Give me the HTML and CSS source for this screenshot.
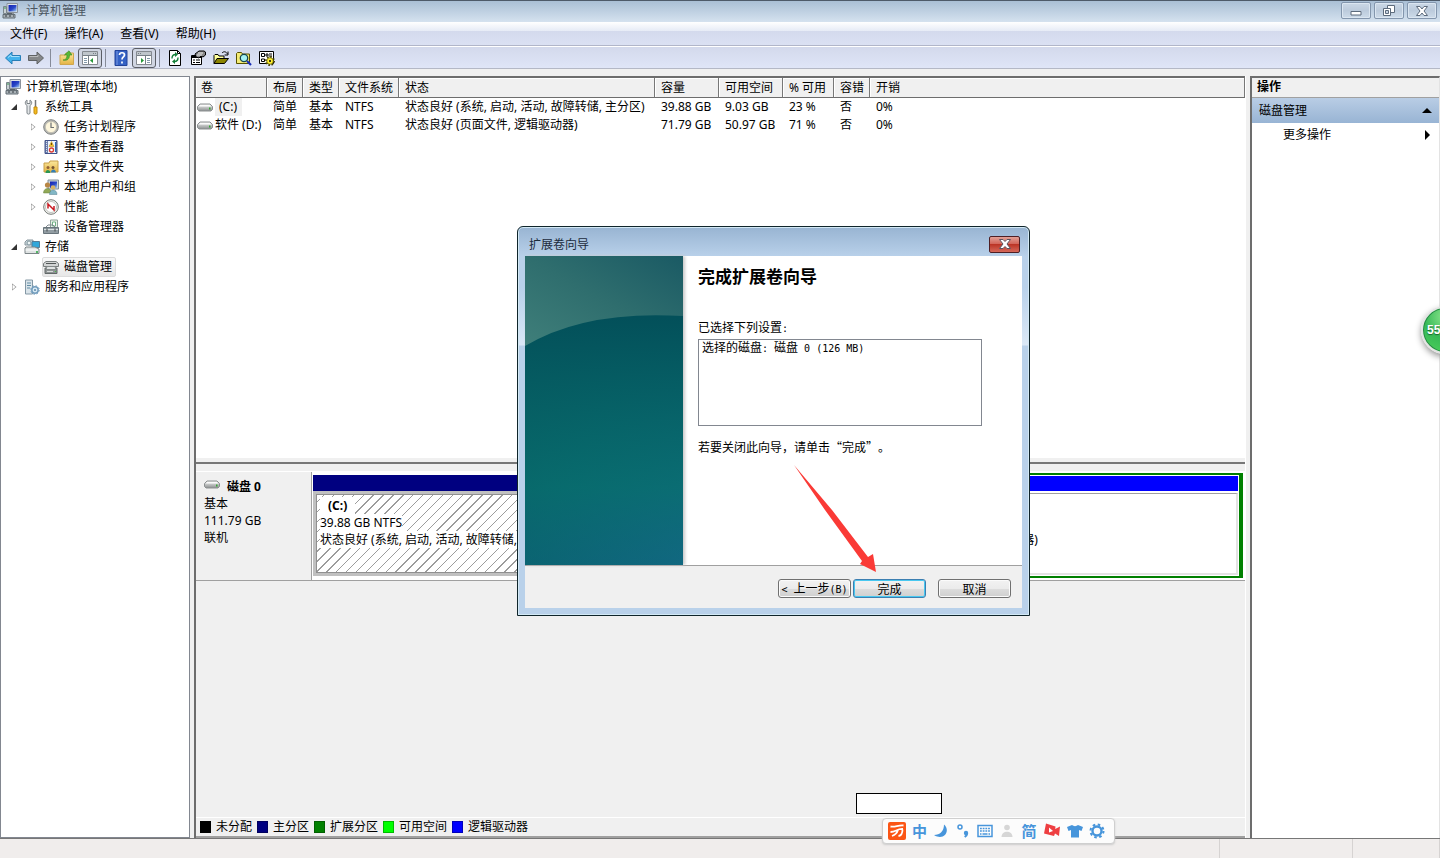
FILE: index.html
```html
<!DOCTYPE html>
<html lang="zh-CN">
<head>
<meta charset="utf-8">
<title>计算机管理</title>
<link rel="stylesheet" href="styles.css">
</head>
<body>
<svg class="defs" aria-hidden="true">
  <defs>
    <linearGradient id="screen" x2="1" y2="1"><stop offset="0" stop-color="#1520b0"/><stop offset=".55" stop-color="#2a48c8"/><stop offset="1" stop-color="#a9d4f5"/></linearGradient>
    <linearGradient id="metal" x2="0" y2="1"><stop offset="0" stop-color="#f4f4f4"/><stop offset="1" stop-color="#8b8f8f"/></linearGradient>
    <linearGradient id="gold" x2="0" y2="1"><stop offset="0" stop-color="#fbe89c"/><stop offset="1" stop-color="#e4b345"/></linearGradient>
  </defs>
  <symbol id="i-computer" viewBox="0 0 16 16">
    <path d="M5 .5h10.500v9H5z" fill="#dfe3e6" stroke="#8b939c"/><path d="M6.500 2h8v6.500h-8z" fill="url(#screen)"/><path d="M9 9.500h3v2H9z" fill="#8d949b"/>
    <path d="M1.500 3.500h3v7h-3z" fill="#c8d0d4" stroke="#7b868c"/><path d="M2 5h2" stroke="#3c9a52"/>
    <path d="M1 11.500h12v3.500H1z" fill="#a8b1b6" stroke="#636d74"/><path d="M3 13h2m2 0h2m2 0h1" stroke="#343b40"/><path d="M5 10.500h5" stroke="#596168"/>
  </symbol>
  <symbol id="i-drive" viewBox="0 0 16 9">
    <path d="M3 1h10l2.500 2.500v3L14 8H2L.5 6.500v-3z" fill="url(#metal)" stroke="#8b8f90"/><path d="M3 2h10l1 1.500H2z" fill="#fafafa"/><path d="M12 4.500h1.500v2H12z" fill="#33a532"/>
  </symbol>
  <symbol id="i-tools" viewBox="0 0 16 16">
    <path d="M3 1v3.500h3V1c2.500 1.500 2 4.500 0 5.500V14c0 1.500-3 1.500-3 0V6.500C1 5.500.5 2.500 3 1z" fill="#e3e6e8" stroke="#7c8388"/><path d="M11.500 1v7" stroke="#777" stroke-width="1.500"/><path d="M10 8h3v6c0 1.500-3 1.500-3 0z" fill="#f3bb20" stroke="#c58b0b"/>
  </symbol>
  <symbol id="i-clock" viewBox="0 0 16 16"><circle cx="8" cy="8" r="7.300" fill="#b5b7b5" stroke="#828482"/><circle cx="8" cy="8" r="5.600" fill="#fdf6dc" stroke="#b9b6a6" stroke-width=".6"/><path d="M8 3.500V8.500H11" fill="none" stroke="#6c7072" stroke-width="1.200"/></symbol>
  <symbol id="i-event" viewBox="0 0 16 16"><path d="M2 1.500h12v13H2z" fill="#7182b0" stroke="#41528a"/><path d="M5 2h8v12H5z" fill="#eef3fa"/><path d="M3.500 2v12" stroke="#dbe1ec" stroke-dasharray="1 1"/><path d="M8.500 2.500 11 7.500H6z" fill="#f5c22a" stroke="#b98a12" stroke-width=".5"/><path d="M8.500 4v2" stroke="#744b00"/><circle cx="8.500" cy="11" r="2" fill="#fff" stroke="#d93a32" stroke-width="1.300"/><path d="M12.500 3v10" stroke="#2e67b4"/></symbol>
  <symbol id="i-share" viewBox="0 0 16 16"><path d="M1 4h5l1-2h8v11H1z" fill="url(#gold)" stroke="#c9a04a"/><circle cx="5" cy="8.500" r="1.500" fill="#946236"/><circle cx="10" cy="8.500" r="1.500" fill="#715031"/><path d="M2.500 14c0-4 4.500-4 5 0z" fill="#2b9652"/><path d="M8 13.500c0-4 4.500-4 5 0z" fill="#347eb5"/></symbol>
  <symbol id="i-users" viewBox="0 0 16 16"><path d="M5 1h10.500v9H5z" fill="#c9d4df" stroke="#84919c"/><path d="M7 2.500h7V9H7z" fill="url(#screen)"/><circle cx="4.500" cy="6" r="2.600" fill="#b88645"/><path d="M.5 14c0-6 8-6 8 0z" fill="#91a957" stroke="#66813c" stroke-width=".5"/><circle cx="10" cy="8.500" r="2.300" fill="#d6b467"/><path d="M6.500 15.500c0-6 7.500-6 7.500 0z" fill="#81b7c6" stroke="#547f91" stroke-width=".5"/></symbol>
  <symbol id="i-perf" viewBox="0 0 16 16"><circle cx="8" cy="8" r="7.300" fill="#f5f5f0" stroke="#747976"/><circle cx="8" cy="8" r="5.500" fill="#fff" stroke="#a7aaa6" stroke-width=".7"/><path d="M5 9.500V5L11 11V7" fill="none" stroke="#c91920" stroke-width="1.500"/></symbol>
  <symbol id="i-device" viewBox="0 0 16 16"><path d="M7.500 1h7v8h-7z" fill="#e9f2e9" stroke="#91a39a"/><path d="M9.500 3h3v4h-3z" fill="#fff" stroke="#70b284"/><path d="M3 8l2-2h5l2 2" fill="none" stroke="#818a90"/><path d="M.5 8.500h15v6H.5z" fill="#929da3" stroke="#68747b"/><path d="M1 10.500h14" stroke="#dce2e3"/><path d="M4 9.500v3m8-3v3" stroke="#42494d"/></symbol>
  <symbol id="i-storage" viewBox="0 0 16 16"><path d="M3 1h6v5H1V3z" fill="#cbd8dd" stroke="#89979f"/><circle cx="5" cy="4" r="2" fill="#edf5f6" stroke="#80959d"/><path d="M8 2.500h7.500v6H8z" fill="#31a7da" stroke="#517d98"/><path d="M2 8h9l4 2v4.500H1V9z" fill="#dfe3e3" stroke="#7c8588"/><path d="M1.500 11H14" stroke="#fff"/><path d="M12 13h2" stroke="#22a839" stroke-width="1.500"/></symbol>
  <symbol id="i-disk" viewBox="0 0 16 16"><path d="M3 2.500h10l2.500 2v3h-15v-3z" fill="#d3d5d5" stroke="#777c7c"/><path d="M3 4.500h10" stroke="#535858"/><path d="M2 9h12v5.500H2z" fill="#8e9494" stroke="#626868"/><path d="M4 7.500h8l1 3H3z" fill="#e1e4e4" stroke="#848989"/><path d="M4 12.500h6" stroke="#d7dada"/><path d="M12 12.500h1" stroke="#44c044"/></symbol>
  <symbol id="i-services" viewBox="0 0 16 16"><path d="M1.500 1h7v14h-7z" fill="#dae4ea" stroke="#8498a5"/><path d="M3 4h4M3 6.500h4M3 9h3" stroke="#628da4"/><circle cx="11" cy="11" r="3.200" fill="#d8e9f4" stroke="#739dbd" stroke-width="1.500"/><circle cx="11" cy="11" r="4.300" fill="none" stroke="#739dbd" stroke-dasharray="1.500 1.900"/><circle cx="11" cy="11" r="1" fill="#5d87a7"/></symbol>
  <symbol id="i-panel" viewBox="0 0 16 16"><path d="M.5 1.500h15v13H.5z" fill="#fff" stroke="#848990"/><path d="M1 2h14v3H1z" fill="#bfc5cb"/><path d="M11 3.500h1m1 0h1M1 5.500h14M6.500 6v8" stroke="#777f87"/><path d="M2 8.500h3M2 10.500h3M2 12.500h3" stroke="#8298aa"/><path d="M11 8v5L8 10.500z" fill="#269739"/></symbol>
</svg>

<div class="app">
  <header class="titlebar">
    <svg class="ico"><use href="#i-computer"/></svg>
    <h1 class="title">计算机管理</h1>
    <div class="winbtns">
      <button class="winbtn" aria-label="最小化"><svg width="12" height="12" viewBox="0 0 12 12"><path d="M1 6.500h10v3.500H1z" fill="#fff" stroke="#5d6b7c"/></svg></button>
      <button class="winbtn" aria-label="还原"><svg width="12" height="12" viewBox="0 0 12 12"><path d="M4.500.5h7v7h-7z" fill="#fff" stroke="#5d6b7c"/><path d="M.5 3.500h7v7h-7z" fill="#fff" stroke="#5d6b7c"/><path d="M2.500 5.500h3v3h-3z" fill="#c9d6e5" stroke="#5d6b7c"/></svg></button>
      <button class="winbtn" aria-label="关闭"><svg width="12" height="12" viewBox="0 0 12 12"><path d="M.5 1.500h3.500L6 4l2-2.500h3.500L8 6l3.500 4.500H8L6 8l-2 2.500H.5L4 6z" fill="#fff" stroke="#5d6b7c"/></svg></button>
    </div>
  </header>
  <nav class="menubar">
    <button>文件(F)</button><button>操作(A)</button><button>查看(V)</button><button>帮助(H)</button>
  </nav>
  <div class="toolbar">
    <button aria-label="后退"><svg class="ico" viewBox="0 0 16 16"><path d="M.5 8 7 2v3.500h8.500v5H7V14z" fill="#43b2ec" stroke="#277db6"/><path d="M3 7.500 6 5v1.500h8.500" fill="none" stroke="#a7e1fc"/></svg></button>
    <button aria-label="前进"><svg class="ico" viewBox="0 0 16 16"><path d="M15.500 8 9 2v3.500H.5v5H9V14z" fill="#858789" stroke="#5e6163"/><path d="M1.500 6.500H10V5" fill="none" stroke="#b9babc"/></svg></button>
    <span class="sep"></span>
    <button aria-label="上一级"><svg class="ico" viewBox="0 0 16 16"><path d="M1 5h5l1-2h7.500v11.500H1z" fill="url(#gold)" stroke="#cfa650"/><path d="M4 10c3 0 4-2 4-5H5.500L10 .8 13 5h-2.500c0 4-2 6-6.500 5z" fill="#56b836" stroke="#358821" stroke-width=".6"/></svg></button>
    <button class="pressed" aria-label="显示控制台树"><svg class="ico"><use href="#i-panel"/></svg></button>
    <span class="sep"></span>
    <button aria-label="帮助"><svg class="ico" viewBox="0 0 16 16"><path d="M2 .5h12v15H2z" fill="#3461c5" stroke="#234399"/><path d="M4 1v14" stroke="#7899e1"/><path d="M6.500 5c0-3 5-3 5 0 0 2-2.500 2-2.500 4.500M9 11.500v2" fill="none" stroke="#fff" stroke-width="1.700"/></svg></button>
    <button class="pressed" aria-label="显示操作窗格"><svg class="ico flip"><use href="#i-panel"/></svg></button>
    <span class="sep"></span>
    <button aria-label="刷新"><svg class="ico" viewBox="0 0 16 16"><path d="M2.500.5h8l3 3v12h-11z" fill="#fff" stroke="#000"/><path d="M10.500.5v3h3" fill="none" stroke="#000"/><path d="M5 8.500c0-3 1.500-4 3.500-4M11 7.500c0 3-1.500 4-3.500 4" fill="none" stroke="#14803b" stroke-width="1.400"/><path d="M8 2v5l3-2.500zM8 9v5l-3-2.500z" fill="#14803b"/></svg></button>
    <button aria-label="属性"><svg class="ico" viewBox="0 0 16 16"><path d="M1.500 5.500h10v9h-10z" fill="#fff" stroke="#000"/><path d="M2 7h9" stroke="#000" stroke-width="2"/><path d="M3 10h2m1 0h4M3 12.500h2m1 0h4" stroke="#000"/><path d="M5 4 9 1h5l1.500 1v3l-2.500 2-2-1-2 2-3-1z" fill="#888" stroke="#000"/><path d="M8 3h5M7 5h5" stroke="#eee"/></svg></button>
    <button aria-label="打开"><svg class="ico" viewBox="0 0 16 16"><path d="M1 13.500v-8l1-1h3l1 1.500h5v3" fill="#ffff9c" stroke="#000"/><path d="M1 13.500 4 8.500h11.500l-4 5z" fill="#8b8400" stroke="#000"/><path d="M9 3c2-2 4-1.500 5.500 1M15 1.500v3.500h-3.500" fill="none" stroke="#000"/></svg></button>
    <button aria-label="查找"><svg class="ico" viewBox="0 0 16 16"><path d="M.5 13.500V3.500l1-1h4l1 1.500h7v9.500z" fill="#f4eb75" stroke="#585200"/><circle cx="8" cy="8" r="3.700" fill="#a6f3f5" stroke="#15454d" stroke-width="1.300"/><path d="m11 11 4 4" stroke="#1b2eb7" stroke-width="2.200"/></svg></button>
    <button aria-label="设置"><svg class="ico" viewBox="0 0 16 16"><path d="M.5 1.500h14v12H.5z" fill="#fff" stroke="#000"/><path d="M2.500 3.500h3v3h-3zM2.500 9h3v2.500h-3z" fill="none" stroke="#000"/><path d="M7 4h2v2H7zM10 4h3M10 6h3" fill="none" stroke="#000"/><circle cx="11" cy="11" r="4" fill="none" stroke="#3f3b00" stroke-width="2" stroke-dasharray="1.500 1.600"/><circle cx="11" cy="11" r="3.300" fill="#ffef30" stroke="#5a5400" stroke-width=".7"/><circle cx="11" cy="11" r="1" fill="#000"/></svg></button>
  </div>

  <main class="workspace">
    <aside class="tree">
      <ul>
        <li class="node root"><svg class="ico"><use href="#i-computer"/></svg><span>计算机管理(本地)</span></li>
        <li class="node lv1"><i class="exp open"></i><svg class="ico"><use href="#i-tools"/></svg><span>系统工具</span></li>
        <li class="node lv2"><i class="exp shut"></i><svg class="ico"><use href="#i-clock"/></svg><span>任务计划程序</span></li>
        <li class="node lv2"><i class="exp shut"></i><svg class="ico"><use href="#i-event"/></svg><span>事件查看器</span></li>
        <li class="node lv2"><i class="exp shut"></i><svg class="ico"><use href="#i-share"/></svg><span>共享文件夹</span></li>
        <li class="node lv2"><i class="exp shut"></i><svg class="ico"><use href="#i-users"/></svg><span>本地用户和组</span></li>
        <li class="node lv2"><i class="exp shut"></i><svg class="ico"><use href="#i-perf"/></svg><span>性能</span></li>
        <li class="node lv2"><i class="exp"></i><svg class="ico"><use href="#i-device"/></svg><span>设备管理器</span></li>
        <li class="node lv1"><i class="exp open"></i><svg class="ico"><use href="#i-storage"/></svg><span>存储</span></li>
        <li class="node lv2"><i class="exp"></i><span class="selected"><svg class="ico"><use href="#i-disk"/></svg><span>磁盘管理</span></span></li>
        <li class="node lv1"><i class="exp shut"></i><svg class="ico"><use href="#i-services"/></svg><span>服务和应用程序</span></li>
      </ul>
    </aside>

    <section class="center">
      <div class="volumes">
        <table>
          <colgroup><col class="c-vol"><col class="c-s"><col class="c-s"><col class="c-fs"><col class="c-state"><col class="c-size"><col class="c-size"><col class="c-pct"><col class="c-s"><col></colgroup>
          <thead><tr><th>卷</th><th>布局</th><th>类型</th><th>文件系统</th><th>状态</th><th>容量</th><th>可用空间</th><th>% 可用</th><th>容错</th><th>开销</th></tr></thead>
          <tbody>
            <tr><td><span class="vol"><svg class="drv"><use href="#i-drive"/></svg><span class="hot">(C:)</span></span></td><td>简单</td><td>基本</td><td>NTFS</td><td>状态良好 (系统, 启动, 活动, 故障转储, 主分区)</td><td>39.88 GB</td><td>9.03 GB</td><td>23 %</td><td>否</td><td>0%</td></tr>
            <tr><td><span class="vol"><svg class="drv"><use href="#i-drive"/></svg><span>软件 (D:)</span></span></td><td>简单</td><td>基本</td><td>NTFS</td><td>状态良好 (页面文件, 逻辑驱动器)</td><td>71.79 GB</td><td>50.97 GB</td><td>71 %</td><td>否</td><td>0%</td></tr>
          </tbody>
        </table>
      </div>
      <div class="graph">
        <div class="diskrow">
          <div class="diskinfo">
            <div class="diskname"><svg class="drv"><use href="#i-drive"/></svg><b>磁盘 0</b></div>
            <div>基本</div><div>111.79 GB</div><div>联机</div>
          </div>
          <div class="parts">
            <div class="part primary"><div class="strip"></div><div class="body hatch"><div><b>(C:)</b></div><div><span>39.88 GB NTFS</span></div><div><span>状态良好 (系统, 启动, 活动, 故障转储, 主分区)</span></div></div></div>
            <div class="part logical"><div class="strip"></div><div class="body"><div><b>软件 (D:)</b></div><div><span>71.79 GB NTFS</span></div><div><span>状态良好 (页面文件, 逻辑驱动器)</span></div></div></div>
          </div>
        </div>
      </div>
      <div class="legend">
        <span><i class="k-black"></i>未分配</span><span><i class="k-navy"></i>主分区</span><span><i class="k-green"></i>扩展分区</span><span><i class="k-lime"></i>可用空间</span><span><i class="k-blue"></i>逻辑驱动器</span>
      </div>
    </section>

    <aside class="actions">
      <h2>操作</h2>
      <button class="group">磁盘管理<svg width="10" height="5"><path d="M0 5 5 0l5 5z"/></svg></button>
      <button class="more">更多操作<svg width="5" height="10"><path d="M0 0l5 5-5 5z"/></svg></button>
    </aside>
  </main>
  <footer class="status"><span></span><span></span><span></span></footer>
</div>

<section class="dialog" role="dialog" aria-labelledby="dlg-title">
  <header class="dlg-head"><span id="dlg-title">扩展卷向导</span>
    <button class="dlg-close" aria-label="关闭"><svg width="12" height="10" viewBox="0 0 12 10"><path d="M.5.5H4l2 2 2-2h3.500L8 5l3.500 4.500H8l-2-2-2 2H.5L4 5z" fill="#fff" stroke="#5c5560"/></svg></button>
  </header>
  <div class="dlg-client">
    <div class="dlg-page">
      <svg class="banner" viewBox="0 0 158 309" preserveAspectRatio="none">
        <defs><linearGradient id="bn" x2="1" y2="1"><stop offset="0" stop-color="#06494e"/><stop offset=".5" stop-color="#08606a"/><stop offset="1" stop-color="#126682"/></linearGradient>
        <linearGradient id="bn2" x2="0" y2="1"><stop offset=".2" stop-color="#03505a"/><stop offset=".75" stop-color="#08706f" stop-opacity=".7"/><stop offset="1" stop-color="#0f6a7d" stop-opacity=".4"/></linearGradient>
        <linearGradient id="sheen" x1="0" y1="1" x2="1" y2="0"><stop offset="0" stop-color="#3f7f7a"/><stop offset=".5" stop-color="#2f6e6e"/><stop offset="1" stop-color="#1a5a64"/></linearGradient></defs>
        <path d="M0 0h158v309H0z" fill="url(#bn)"/><path d="M0 0h158v309H0z" fill="url(#bn2)"/><path d="M0 0h158v60Q60 54 0 90z" fill="url(#sheen)"/>
      </svg>
      <div class="dlg-text">
        <h2>完成扩展卷向导</h2>
        <label for="settings">已选择下列设置<span class="mono">:</span></label>
        <div class="settings" id="settings" role="textbox" aria-readonly="true">选择的磁盘<span class="mono">: </span>磁盘<span class="mono"> 0 (126 MB)</span></div>
        <p>若要关闭此向导，请单击“完成”。</p>
      </div>
    </div>
    <div class="dlg-foot">
      <button class="btn"><span class="mono">&lt; </span>上一步<span class="mono">(B)</span></button>
      <button class="btn default">完成</button>
      <button class="btn cancel">取消</button>
    </div>
  </div>
</section>

<svg class="arrow" width="84" height="110" viewBox="0 0 84 110"><path d="M0 0 38 45 74 92 79 89 82 107 66 99 68 96 31 45z" fill="#fa3a36"/></svg>
<div class="blank"></div>
<div class="ime">
  <svg class="logo" viewBox="0 0 18 18"><rect width="18" height="18" rx="2" fill="#fb5515"/><path d="M2.500 4.500C7 5.500 10 3 15.500 3.500M2.500 10C8 10 9 6.500 15 7M10 8c-1 3-3 5-6 6M14.500 7.500c0 3-1 6-4 6.500" fill="none" stroke="#fff" stroke-width="1.800"/></svg>
  <b>中</b>
  <svg viewBox="0 0 16 16"><path d="M11 1.500c7 6 0 17-10 10.500 6 0 10-4 10-10.500z" fill="#4795db"/></svg>
  <svg viewBox="0 0 16 16"><circle cx="5" cy="4" r="2" fill="none" stroke="#4795db" stroke-width="1.500"/><circle cx="11" cy="10" r="2.200" fill="#4795db"/><path d="M12.200 10c0 2-1 3-2.500 4" fill="none" stroke="#4795db" stroke-width="2"/></svg>
  <svg viewBox="0 0 16 16"><rect x="1" y="2.500" width="14" height="11" fill="none" stroke="#4795db" stroke-width="1.500"/><path d="M3 5.500h10M3 8h10" stroke="#4795db" stroke-width="1.500" stroke-dasharray="1.800 .9"/><path d="M3 11h1.500m1 0h5m1 0H13" stroke="#4795db" stroke-width="1.500"/></svg>
  <svg viewBox="0 0 16 16"><circle cx="8" cy="4.500" r="2.800" fill="#d6d6d6"/><path d="M2.500 14c0-7 11-7 11 0z" fill="#d6d6d6"/></svg>
  <b>简</b>
  <svg class="cam" viewBox="0 0 18 16"><path d="M3 .5 12.500 3.500l-.3 2.500L17 3.500 16 13l-4-2.500-1 2.500L1 10.500z" fill="#ee3f42"/><path d="M6 4.500v5l4-1.500z" fill="#fff"/></svg>
  <svg viewBox="0 0 16 16"><path d="M5 2c1.500 1.500 4.500 1.500 6 0l5 2-1.500 4L12 7v7.500H4V7l-2.500 1L0 4z" fill="#4795db"/></svg>
  <svg viewBox="0 0 16 16"><circle cx="8" cy="8" r="4.500" fill="none" stroke="#4795db" stroke-width="2.400"/><circle cx="8" cy="8" r="6.500" fill="none" stroke="#4795db" stroke-width="2" stroke-dasharray="2.550 2.550"/></svg>
</div>
<div class="meter"><div class="ball">55</div></div>
</body>
</html>
```
FILE: styles.css
```css
* { box-sizing: border-box; }
html, body { height: 100%; margin: 0; overflow: hidden; }
body { position: relative; background: #f0f0f0; color: #000; font: 12px/18px "Noto Sans", "Noto Sans CJK SC", sans-serif; }
button { margin: 0; padding: 0; border: 0; background: none; color: inherit; font: inherit; }
h1, h2, p, ul { margin: 0; padding: 0; font-size: 12px; }
.defs { position: absolute; width: 0; height: 0; }
.ico { display: block; flex: none; width: 16px; height: 16px; }
.flip { transform: scaleX(-1); }
.drv { display: block; flex: none; width: 16px; height: 9px; }

.app { display: flex; flex-direction: column; height: 100%; }
.titlebar { display: flex; align-items: center; flex: none; height: 22px; padding: 0 3px 2px 2px; gap: 8px; border-top: 1px solid #4d5a69; background: linear-gradient(#a9bfd5, #d5e2ef); }
.title { flex: 1; font-weight: 400; color: #4a5560; }
.winbtns { display: flex; gap: 3px; }
.winbtn { display: grid; place-items: center; width: 30px; height: 17px; border: 1px solid #8396ad; border-radius: 2px; background: linear-gradient(#cbd8e6, #bccbdc 50%, #cddbe9); box-shadow: inset 0 0 0 1px #dbe6f1; }
.menubar { display: flex; align-items: center; flex: none; gap: 17px; height: 24px; padding-left: 10px; border-bottom: 1px solid #b1b6c9; background: linear-gradient(#fff, #e6ebf6 9px, #d4daed 9px, #dbe1f3); }
.toolbar { display: flex; align-items: center; flex: none; height: 23px; padding-left: 5px; border-top: 1px solid #fff; border-bottom: 1px solid #b4b8c6; background: linear-gradient(#d3d9ec, #dfe5f7); }
.toolbar button { margin-right: 7px; }
.toolbar .sep { width: 1px; height: 18px; margin: 0 8px 0 -1px; background: #868b99; }
.toolbar .pressed { display: grid; place-items: center; width: 24px; height: 20px; margin: 0 4px 0 -4px; border: 1px solid #5b5e66; border-radius: 3px; background: #d0d5e2; }
.toolbar .pressed + .sep { margin-left: -1px; margin-right: 7px; }

.workspace { display: grid; grid-template-columns: 190px minmax(0, 1fr) 190px; column-gap: 4px; flex: 1; min-height: 0; padding-top: 7px; }
.tree { border: 1px solid #828790; background: #fff; }
.tree ul { list-style: none; }
.node { display: flex; align-items: center; height: 20px; gap: 5px; white-space: nowrap; }
.root { padding-left: 4px; }
.lv1 { padding-left: 8px; }
.lv2 { padding-left: 27px; }
.exp { display: grid; place-items: center; width: 10px; height: 10px; }
.exp.open::before { content: ""; border: 3px solid #333; border-top-color: transparent; border-left-color: transparent; }
.exp.shut::before { content: ""; width: 5px; height: 8px; background: #8f8f8f; clip-path: polygon(0 0, 100% 50%, 0 100%, 0 0, 20% 20%, 20% 80%, 80% 50%, 20% 20%); }
.selected { display: flex; align-items: center; gap: 5px; height: 20px; margin-left: -1px; padding-right: 3px; border: 1px solid #dcdcdc; border-radius: 2px; background: linear-gradient(#f9f9f9, #e7e7e7); }

.center { display: flex; flex-direction: column; min-width: 0; border-left: 2px solid #6d6d6d; border-right: 1px solid #fff; }
.volumes { flex: none; height: 388px; border-top: 2px solid #6d6d6d; border-bottom: 2px solid #777; background: linear-gradient(#fff, #fff) top / 100% 380px no-repeat, #f0f0f0; }
table { width: 100%; table-layout: fixed; border-collapse: separate; border-spacing: 0; }
th, td { padding: 0 0 0 6px; white-space: nowrap; text-align: left; font-weight: 400; }
th { height: 20px; border-right: 1px solid #777; border-bottom: 1px solid #6d6d6d; background: #f0f0f0; box-shadow: inset 1px 1px #fff; }
th:first-child { padding-left: 5px; }
td { height: 18px; }
td:first-child { padding-left: 1px; }
.c-vol { width: 71px; }
.c-s { width: 36px; }
.c-fs { width: 60px; }
.c-state { width: 256px; }
.c-size { width: 64px; }
.c-pct { width: 51px; }
.vol { display: flex; align-items: center; gap: 2px; }
.hot { padding: 0 5px 0 4px; background: #f0f0f0; }

.graph { flex: 1; min-height: 0; padding-top: 7px; }
.diskrow { display: flex; height: 110px; border-top: 1px solid #fff; border-bottom: 1px solid #a0a0a0; }
.diskinfo { flex: none; width: 116px; padding: 6px 8px; border-right: 1px solid #a0a0a0; line-height: 17px; }
.diskname { display: flex; gap: 7px; }
.diskname .drv { margin-top: 2px; }
.parts { display: flex; flex: 1; min-width: 0; padding: 1px 2px 2px 1px; background: #fff; }
.part { display: flex; flex-direction: column; min-width: 0; }
.strip { flex: none; height: 15px; }
.body { flex: 1; padding: 3px 4px; overflow: hidden; white-space: nowrap; line-height: 17px; }
.primary { flex: 549; padding: 2px 0; }
.primary .strip { height: 16px; background: #000080; }
.primary .body { border: 3px solid #c0c0c0; outline: 1px solid #909090; outline-offset: -4px; }
.body b { padding: 0 8px; }
.hatch { background: repeating-linear-gradient(135deg, #fff 0 6px, #9c9c9c 6px 7px); }
.hatch b, .hatch span { display: inline-block; background: #fff; }
.logical { flex: 381; padding: 1px; border: solid #008000; border-width: 2px 4px 2px 4px; }
.logical .strip { background: #0000ff; }
.logical .body { margin-top: 2px; border-top: 1px solid #a0a0a0; border-right: 2px solid #e3e3e3; border-bottom: 2px solid #e3e3e3; }
.legend { display: flex; align-items: center; flex: none; gap: 5px; height: 21px; padding-left: 4px; border-top: 1px solid #fff; border-bottom: 2px solid #a0a0a0; }
.legend span { display: flex; align-items: center; gap: 5px; }
.legend i { width: 11px; height: 12px; border: 1px solid #0004; }
.k-black { background: #000; }
.k-navy { background: #000080; }
.k-green { background: #008000; }
.k-lime { background: #0f0; }
.k-blue { background: #00f; }

.actions { display: flex; flex-direction: column; border-left: 2px solid #6d6d6d; border-top: 2px solid #6d6d6d; border-right: 1px solid #e3e3e3; background: #fff; }
.actions h2 { height: 20px; padding-left: 5px; border-bottom: 1px solid #a0a0a0; background: #f0f0f0; line-height: 18px; }
.actions button { display: flex; align-items: center; justify-content: space-between; height: 25px; }
.actions .group { padding: 0 7px; background: linear-gradient(#b9cde5, #98b4d4); }
.actions .more { height: 23px; padding: 0 9px 0 31px; }
.status { display: grid; grid-template-columns: 1fr 133px 87px; flex: none; height: 20px; border-top: 1px solid #777; background: #f0edec; }
.status span { border-right: 1px solid #d6d3d2; }

.dialog { position: absolute; left: 517px; top: 226px; display: flex; flex-direction: column; width: 513px; height: 390px; padding: 0 7px 7px; border: 1px solid #10252b; border-radius: 6px 6px 0 0; background: linear-gradient(#98b4d2, #b9d1ea 30px, #b9d1ea 60px, #dbe8f6 118px, #b9d1ea 119px); box-shadow: inset 0 0 0 1px #d3e9f5; font-family: "Noto Sans CJK SC", sans-serif; text-spacing-trim: space-all; }
.dlg-head { display: flex; align-items: center; justify-content: space-between; flex: none; height: 29px; padding: 5px 2px 0 4px; color: #1c2b3c; }
.dlg-close { display: grid; place-items: center; width: 31px; height: 17px; border: 1px solid #4e1f24; border-radius: 2px; background: linear-gradient(#e2a096, #d3665a 45%, #bc3526 50%, #d5685a); }
.dlg-client { display: flex; flex-direction: column; flex: 1; background: #f0f0f0; }
.dlg-page { display: flex; height: 310px; border-bottom: 1px solid #a0a0a0; background: #fff; }
.banner { display: block; flex: none; width: 158px; height: 309px; box-shadow: 2px 0 3px #c8c8c8; }
.dlg-text { display: flex; flex-direction: column; flex: 1; padding: 8px 40px 0 15px; }
.dlg-text h2 { margin-bottom: 30px; font-size: 17px; line-height: 24px; font-weight: 700; }
.dlg-text p { font-weight: 400; }
.settings { height: 87px; margin: 1px 0 12px; padding: 0 3px; border: 1px solid #828790; line-height: 14px; }
.mono { font-family: "DejaVu Sans Mono", monospace; font-size: 10px; white-space: pre; }
.dlg-foot { display: flex; align-items: center; justify-content: flex-end; flex: 1; gap: 2px; padding: 3px 11px 0 0; }
.btn { width: 73px; height: 19px; border: 1px solid #707070; border-radius: 3px; background: linear-gradient(#f2f2f2, #ebebeb 50%, #ddd 50%, #cfcfcf); box-shadow: inset 0 0 0 1px #fbfbfb; line-height: 16px; white-space: nowrap; }
.btn.default { border-color: #3c7fb1; box-shadow: inset 0 0 0 1px #48c8f0; }
.btn.cancel { margin-left: 10px; }

.arrow { position: absolute; left: 794px; top: 465px; }
.blank { position: absolute; left: 856px; top: 793px; width: 86px; height: 21px; border: 1px solid #000; background: #fff; }
.ime { position: absolute; left: 882px; top: 818px; display: flex; align-items: center; justify-content: space-between; width: 233px; height: 26px; padding: 0 9px 1px 5px; border: 1px solid #cfcfcf; border-radius: 4px; background: #fcfcfc; box-shadow: 0 1px 2px #ccc; color: #4795db; font-size: 15px; }
.ime b { font-weight: 700; }
.ime svg { width: 16px; height: 16px; }
.ime .logo, .ime .cam { width: 18px; height: 18px; }
.meter { position: absolute; right: 0; top: 300px; width: 19px; height: 66px; padding-top: 6px; }
.ball { width: 48px; height: 48px; padding-left: 4px; border: 2px solid #e3e3e3; border-radius: 50%; background: radial-gradient(circle at 50% 20%, #8be58d, #36b956 50%, #4ed35a); box-shadow: 0 3px 6px #999, inset 0 0 0 1px #278746; color: #fff; font: 700 12px/44px "Liberation Sans", sans-serif; text-shadow: 0 1px 1px #17672f; }
```
